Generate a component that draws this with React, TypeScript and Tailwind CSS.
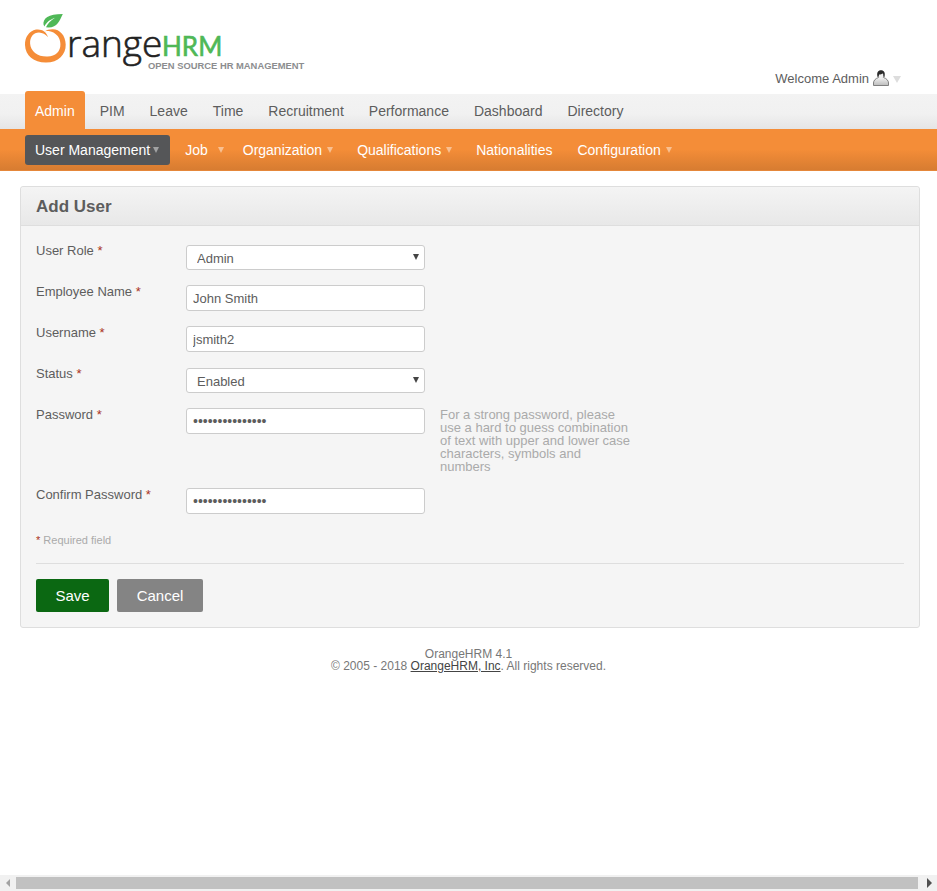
import React from "react";

const mainMenu = ["Admin", "PIM", "Leave", "Time", "Recruitment", "Performance", "Dashboard", "Directory"];

const subMenu = [
  { label: "User Management", arrow: true },
  { label: "Job", arrow: true },
  { label: "Organization", arrow: true },
  { label: "Qualifications", arrow: true },
  { label: "Nationalities", arrow: false },
  { label: "Configuration", arrow: true },
];

const fieldClass = "block w-full rounded-[3px] border border-[#ccc] bg-white text-[#5d5d5d] outline-none";

function Logo() {
  return (
    <svg className="block" width="290" height="64" viewBox="20 10 290 64" role="img" aria-label="OrangeHRM">
      <path
        fill="#f58d38"
        d="M48 37.200C46.500 31.500 41.500 28.800 36 29.600C29 31 24.800 37.500 25 45C25.300 55.500 34 62.700 46 62.600C58.500 62.500 66 54.500 65.700 44.500C65.500 35 59.500 29 52.500 29.200C49 29.300 46.500 30 45 31.200C48 30.800 50 31.200 51.500 31.800C57 33.800 60.200 38 60.400 44C60.700 51.500 55.500 56.400 47.500 56.600C38 57 30.500 51.500 30.100 43.500C29.900 37 33.500 32.800 39 32.600C42.500 32.700 45.500 34.500 48 37.200Z"
      />
      <path
        fill="#4fb857"
        d="M43.500 24.500C42.800 18.500 48 13.900 62.800 13.900C59.500 21 57.500 27.200 48.500 27.400L46 27.300C47.500 23.500 50.500 20.500 55 17.700C49.500 19.800 46.500 22.300 44.300 26.500Z"
      />
      <text
        x="67"
        y="57"
        fontFamily="'Open Sans', 'Noto Sans', sans-serif"
        fontSize="37"
        fontWeight="300"
        fill="#222"
        stroke="#222"
        strokeWidth="0.6"
      >
        range
      </text>
      <text
        x="162"
        y="56"
        fontFamily="Lato, sans-serif"
        fontSize="26"
        fontWeight="400"
        fill="#4fb857"
        stroke="#4fb857"
        strokeWidth="0.6"
      >
        HRM
      </text>
      <text x="148" y="69" fontFamily="'Liberation Sans', Arial, sans-serif" fontSize="9.4" fontWeight="700" fill="#8c8d8f">
        OPEN SOURCE HR MANAGEMENT
      </text>
    </svg>
  );
}

function UserIcon() {
  return (
    <svg width="16" height="16" viewBox="0 0 16 16" aria-hidden="true">
      <defs>
        <linearGradient id="body" x1="0" y1="0" x2="0" y2="1">
          <stop offset="0" stopColor="#f2f2f2" />
          <stop offset="1" stopColor="#bdbdbd" />
        </linearGradient>
      </defs>
      <path d="M.5 15.500V13C.5 10.500 2.500 8.500 5.500 7.500H10.500C13.500 8.500 15.500 10.500 15.500 13V15.500Z" fill="url(#body)" stroke="#808080" strokeWidth="1" />
      <path d="M4.500 7C3.500 2.500 5 .3 8 .3S12.500 2.500 11.500 7L10 6.500H6Z" fill="#2b2b2b" />
      <path d="M6 4.500C7.500 4.500 9 4 10 3.500C10.800 6 10 9 8 9.500C6 9 5.500 7 6 4.500Z" fill="#efefef" />
    </svg>
  );
}

function DownArrow({ className }: { className: string }) {
  return (
    <svg className={className} viewBox="0 0 8 6" preserveAspectRatio="none" aria-hidden="true">
      <path d="M0 0H8L4 6Z" fill="currentColor" />
    </svg>
  );
}

function Row({ id, label, hint, children }: { id: string; label: string; hint?: string; children: React.ReactNode }) {
  return (
    <li className="mb-[15px] flex items-start">
      <label htmlFor={id} className="w-[150px] shrink-0">
        {label} <span className="text-[#aa3322]">*</span>
      </label>
      <div className="relative w-[239px] shrink-0">{children}</div>
      {hint && <span className="ml-[15px] w-[195px] text-[#aaa]">{hint}</span>}
    </li>
  );
}

function SelectField({ id, value, options }: { id: string; value: string; options: string[] }) {
  return (
    <div className="pt-px">
      <select id={id} defaultValue={value} className={`${fieldClass} h-[25px] appearance-none px-[10px] pt-[2px] text-[13px]`}>
        {options.map((o) => (
          <option key={o}>{o}</option>
        ))}
      </select>
      <DownArrow className="pointer-events-none absolute top-[10px] right-[6px] h-[6px] w-[6px] text-[#444]" />
    </div>
  );
}

function TextField({ id, type, value }: { id: string; type: "text" | "password"; value: string }) {
  return (
    <input
      id={id}
      type={type}
      defaultValue={value}
      className={`${fieldClass} h-[26px] px-[6px] ${type === "password" ? "text-[14px]" : "text-[13px]"}`}
    />
  );
}

export default function App() {
  return (
    <div className="flex min-h-screen flex-col bg-white font-['Liberation_Sans',Arial,sans-serif] text-[13px] leading-[13px] text-[#5d5d5d]">
      <header className="flex h-[91px] items-start justify-between pt-[10px] pr-[36px] pl-[20px]">
        <Logo />
        <button type="button" className="mt-[60px] flex items-center">
          <span>Welcome Admin</span>
          <span className="ml-1">
            <UserIcon />
          </span>
          <DownArrow className="mt-[3px] ml-1 h-[7px] w-2 text-[#ddd]" />
        </button>
      </header>

      <nav aria-label="Main">
        <ul className="flex items-end gap-[5px] bg-[linear-gradient(to_bottom,#fff_3px,#f3f3f3_3px,#f1f1f1_60%,#e5e5e5)] pl-[25px] text-[14px]">
          {mainMenu.map((label, i) => (
            <li key={label}>
              <a
                href="#"
                className={`flex h-[38px] items-center rounded-t-[3px] px-[10px] pt-[2px] ${i === 0 ? "bg-[#f48d38] text-white" : ""}`}
              >
                {label}
              </a>
            </li>
          ))}
        </ul>
        <ul className="flex gap-[5px] border-b border-[#e5873a] bg-[linear-gradient(to_bottom,#f48d38_50%,#d77c31)] bg-no-repeat pt-[6px] pb-[5px] pl-[25px] text-[14px] text-white">
          {subMenu.map(({ label, arrow }, i) => (
            <li key={label}>
              <a
                href="#"
                className={`relative flex h-[30px] items-center rounded-[3px] pl-[10px] ${arrow ? "pr-5" : "pr-[10px]"} ${i === 0 ? "bg-[#555658]" : ""}`}
              >
                {label}
                {arrow && <DownArrow className="absolute top-[12px] right-[8%] h-[6px] w-[6px] text-white/45" />}
              </a>
            </li>
          ))}
        </ul>
      </nav>

      <main className="mt-[15px] mr-[17px] ml-[20px] rounded-[3px] border border-[#dedede] bg-[#f5f5f5]">
        <h1 className="flex h-[39px] items-center rounded-t-[3px] border-b border-[#dedede] bg-linear-to-b from-[#f4f4f4] to-[#e8e8e8] px-[15px] text-[17px] font-bold">
          Add User
        </h1>
        <form className="px-[15px] pt-[18px] pb-[15px]" onSubmit={(e) => e.preventDefault()}>
          <ul>
            <Row id="role" label="User Role">
              <SelectField id="role" value="Admin" options={["Admin", "ESS"]} />
            </Row>
            <Row id="employee" label="Employee Name">
              <TextField id="employee" type="text" value="John Smith" />
            </Row>
            <Row id="username" label="Username">
              <TextField id="username" type="text" value="jsmith2" />
            </Row>
            <Row id="status" label="Status">
              <SelectField id="status" value="Enabled" options={["Enabled", "Disabled"]} />
            </Row>
            <Row
              id="password"
              label="Password"
              hint="For a strong password, please use a hard to guess combination of text with upper and lower case characters, symbols and numbers"
            >
              <TextField id="password" type="password" value="correcthorse123" />
            </Row>
            <Row id="confirm" label="Confirm Password">
              <TextField id="confirm" type="password" value="correcthorse123" />
            </Row>
          </ul>
          <p className="mt-[20px] text-[11px] text-[#aaa]">
            <span className="text-[#aa3322]">*</span> Required field
          </p>
          <div className="mt-[16px] flex gap-2 border-t border-[#dedede] pt-[15px] text-[15px] text-white">
            <button type="submit" className="h-[33px] w-[73px] rounded-[2px] bg-[#0b6812]">
              Save
            </button>
            <button type="button" className="h-[33px] w-[86px] rounded-[2px] bg-[#848484]">
              Cancel
            </button>
          </div>
        </form>
      </main>

      <footer className="mt-[20px] text-center text-[12px] leading-[12px] text-[#777]">
        <p>OrangeHRM 4.1</p>
        <p>
          © 2005 - 2018{" "}
          <a href="#" className="text-[#444] underline">
            OrangeHRM, Inc
          </a>
          . All rights reserved.
        </p>
      </footer>

      <div className="mt-auto flex h-4 items-center bg-[#f1f1f1]" aria-hidden="true">
        <svg className="w-4" height="16" viewBox="0 0 16 16">
          <path d="M6 8L10 4V12Z" fill="#a3a3a3" />
        </svg>
        <div className="h-3 flex-1 bg-[#c1c1c1]" />
        <svg className="w-[19px]" height="16" viewBox="0 0 19 16">
          <path d="M14 8L9 3V13Z" fill="#505050" />
        </svg>
      </div>
    </div>
  );
}
